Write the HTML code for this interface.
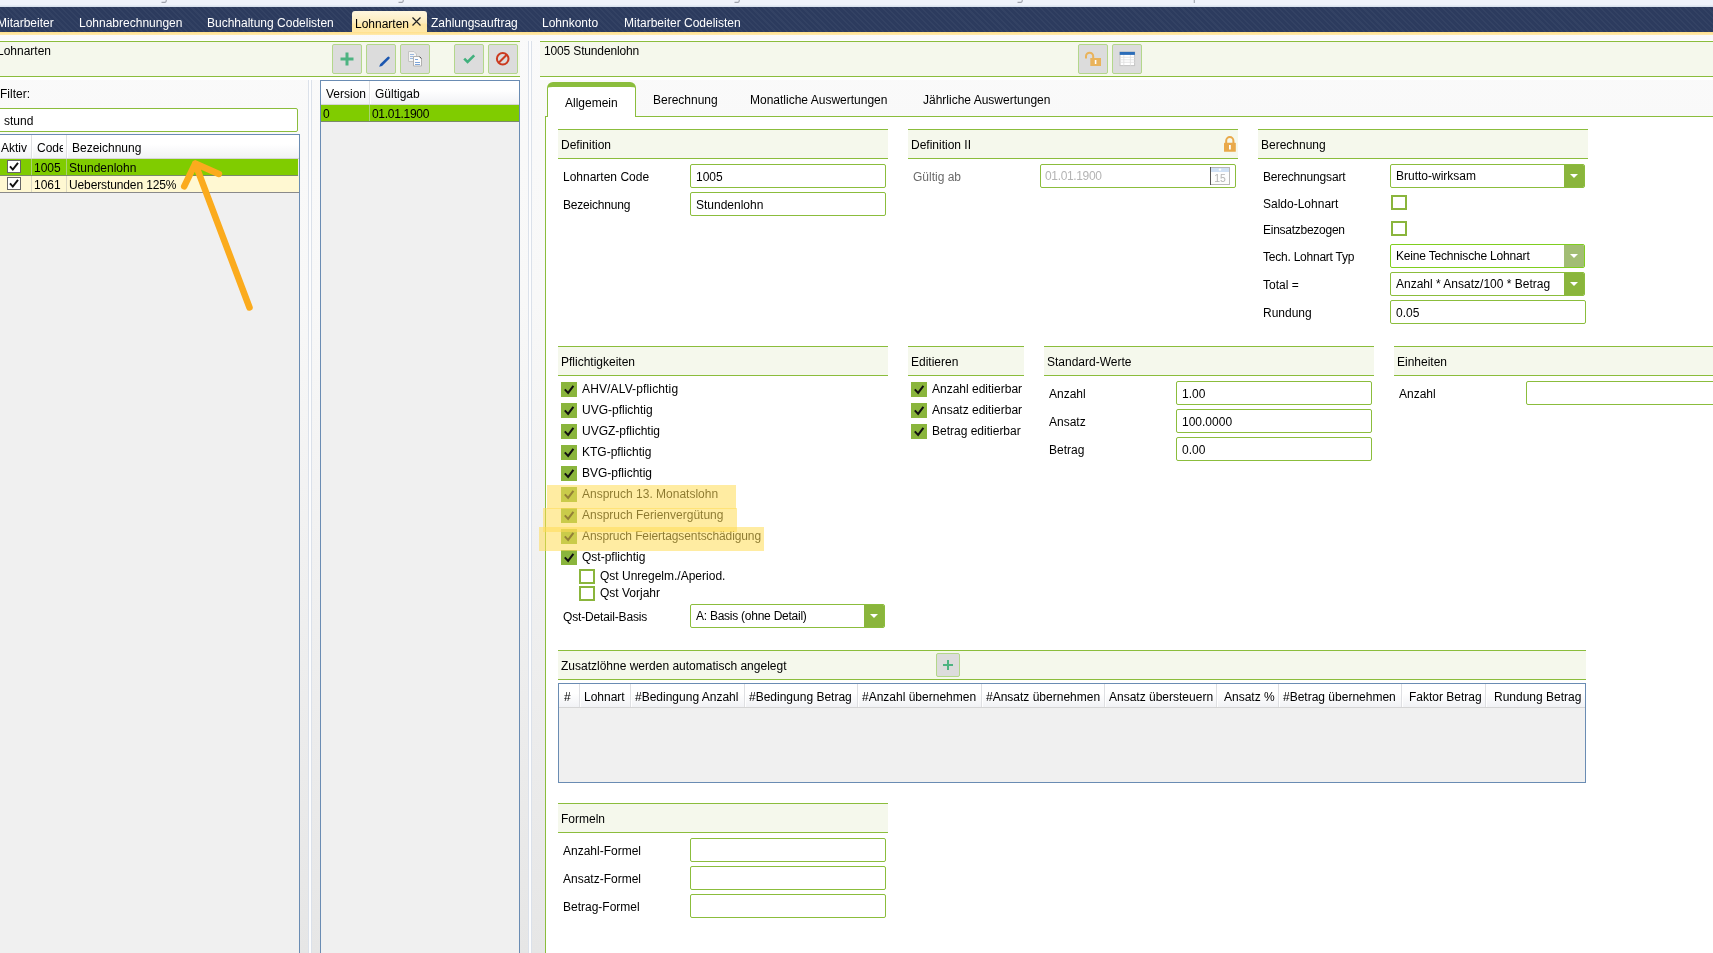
<!DOCTYPE html>
<html>
<head>
<meta charset="utf-8">
<title>Lohnarten</title>
<style>
*{box-sizing:border-box;margin:0;padding:0}
html,body{width:1713px;height:953px;overflow:hidden}
body{position:relative;font-family:"Liberation Sans",sans-serif;font-size:12px;color:#000;
 background:linear-gradient(#fafafa 0,#f8f8f8 300px,#e6e6e6 953px)}
.a{position:absolute;white-space:nowrap}
.t{position:absolute;white-space:nowrap;line-height:16px;height:16px}
/* top */
#top{left:0;top:0;width:1713px;height:7px;background:linear-gradient(#eef2fa 0,#eef2fa 4.5px,#d3deea 7px)}
#nav{left:0;top:7px;width:1713px;height:25px;background:#2c3b5e;
 background-image:repeating-linear-gradient(45deg,rgba(255,255,255,.035) 0,rgba(255,255,255,.035) 1.5px,rgba(0,0,0,0) 1.5px,rgba(0,0,0,0) 4px)}
#nav .t{color:#fff;top:8px}
#yl{left:0;top:32px;width:1713px;height:3px;background:linear-gradient(#ffe08a,#ffeab0)}
#atab{left:352px;top:11px;width:75px;height:22px;border-radius:3px 3px 0 0;background:linear-gradient(#fff7e0 0,#fdecbd 52%,#ffe6a2 62%,#ffe8a8 100%)}
/* green header bars */
.hb{position:absolute;background:#f5f8ec;border-top:1px solid #8bbd3c;border-bottom:1px solid #8bbd3c}
.gh{position:absolute;height:30px;background:#f5f8ec;border-top:1px solid #8bbd3c;border-bottom:1px solid #8bbd3c}
.gh span{position:absolute;left:3px;top:7px;line-height:16px}
/* buttons */
.btn{position:absolute;width:30px;height:30px;background:#dcdcdc;border:1px solid #b3d78b;border-radius:2px}
.btn svg{position:absolute;left:-1px;top:-1px}
/* inputs */
.in{position:absolute;height:24px;background:#fff;border:1px solid #8bbd3c;border-radius:2px;line-height:24px;padding-left:5px;white-space:nowrap;overflow:hidden}
.sel{position:absolute;height:24px;background:#fff;border:1px solid #8bbd3c;border-radius:2px;line-height:23px;padding-left:5px;white-space:nowrap;overflow:hidden}
.sel i{position:absolute;right:0;top:0;width:20px;height:22px;background:#8ab53c}
.sel i:after{content:"";position:absolute;left:6px;top:9px;border:4.5px solid transparent;border-top:4.5px solid #fff;border-bottom:0}
.lb{position:absolute;white-space:nowrap;line-height:16px}
/* checkboxes */
.cb{position:absolute;width:16px;height:15px;background:#8ab53c}
.cb svg{position:absolute;left:0;top:0}
.ce{position:absolute;width:16px;height:15px;background:#fff;border:2px solid #8ab53c}
/* grids */
.grid{position:absolute;background:#f0f0f0;border:1px solid #6a8cb3}
.gh2{position:absolute;left:0;top:0;right:0;background:linear-gradient(#fff 0,#fff 40%,#f1f2f5 100%);border-bottom:1px solid #d5d5d5}
.gh2 b{position:absolute;top:0;bottom:0;width:2px;background:#dedfe2;border-right:1px solid #fff}
.gh2 span{position:absolute;white-space:nowrap;line-height:16px}
</style>
</head>
<body>
<div id="w" style="position:absolute;left:0;top:0;width:1713px;height:953px;overflow:hidden;will-change:transform">
<div class="a" id="top"><svg class="a" style="left:0;top:0" width="1713" height="7" fill="none" stroke="#8b8f99" stroke-width="1.1" opacity=".8"><path d="M161.5 2.4h3.2q1.6 0 1.6-2.4" /><path d="M398.5 2.4h3.2q1.6 0 1.6-2.4" /><path d="M734.5 2.4h3.2q1.6 0 1.6-2.4" /><path d="M1017.5 2.4h3.2q1.6 0 1.6-2.4" /><path d="M1194.3 0v3"/></svg></div>
<div class="a" id="nav">
 <div class="a" id="atab" style="top:4px"></div>
 <span class="t" style="left:-3px">Mitarbeiter</span>
 <span class="t" style="left:79px">Lohnabrechnungen</span>
 <span class="t" style="left:207px">Buchhaltung Codelisten</span>
 <span class="t" style="left:355px;color:#000;top:9px">Lohnarten</span>
 <svg class="a" style="left:411px;top:9px" width="11" height="11"><path d="M1.5 1.5 L9.5 9.5 M9.5 1.5 L1.5 9.5" stroke="#222" stroke-width="1.2" fill="none"/></svg>
 <span class="t" style="left:431px">Zahlungsauftrag</span>
 <span class="t" style="left:542px">Lohnkonto</span>
 <span class="t" style="left:624px">Mitarbeiter Codelisten</span>
</div>
<div class="a" id="yl"></div>

<div class="a" style="left:0;top:40px;width:520px;height:1px;background:#fff"></div>
<div class="a" style="left:0;top:77px;width:520px;height:3px;background:#fff"></div>
<div class="a" style="left:540px;top:40px;width:1180px;height:1px;background:#fff"></div>
<div class="a" style="left:540px;top:77px;width:1180px;height:3px;background:#fff"></div>
<!-- LEFT PANEL -->
<div class="hb" style="left:-2px;top:41px;width:522px;height:36px"></div>
<span class="t" style="left:-3px;top:43px">Lohnarten</span>
<div class="btn" style="left:332px;top:44px"><svg width="30" height="30"><path d="M15 8.5V21.5M8.5 15H21.5" stroke="#4db381" stroke-width="3" fill="none"/></svg></div>
<div class="btn" style="left:366px;top:44px"><svg width="30" height="30"><path d="M13 22.8L14.09 20.27L21.39 13.07A1.3 1.3 0 0 1 23.21 14.93L15.91 22.13Z" transform="translate(0.15,-0.15)" fill="#1c57b0"/></svg></div>
<div class="btn" style="left:400px;top:44px"><svg width="30" height="30"><path d="M8.5 7.5h5.5l2.5 2.5v7.5h-8z" fill="#f4f4f4" stroke="#c4c4c4" stroke-width="1"/><path d="M10 10.5h4M10 12.5h4M10 14.5h4" stroke="#9bb8de" stroke-width="1"/><path d="M13.5 12.5h5.5l2.5 2.5v7h-8z" fill="#fdfdfd" stroke="#b0b0b0" stroke-width="1"/><path d="M19.5 12.5l2 2" stroke="#555" stroke-width="1"/><path d="M15 15.5h3M15 18.5h5M15 20.5h5" stroke="#7ea5d8" stroke-width="1.2" fill="none"/></svg></div>
<div class="btn" style="left:454px;top:44px"><svg width="30" height="30"><path d="M10.2 14.6L13.6 18L20.2 11.4" stroke="#41b07d" stroke-width="2.6" fill="none"/></svg></div>
<div class="btn" style="left:488px;top:44px"><svg width="30" height="30"><circle cx="14.7" cy="14.8" r="5.8" stroke="#cb3a1f" stroke-width="2" fill="none"/><path d="M10.7 18.8L18.7 10.8" stroke="#cb3a1f" stroke-width="2"/></svg></div>
<span class="t" style="left:0px;top:86px">Filter:</span>
<div class="in" style="left:-3px;top:108px;width:301px;height:24px;padding-left:6px;line-height:24px">stund</div>
<div class="grid" style="left:-2px;top:134px;width:302px;height:830px">
 <div class="gh2" style="height:24px"><b style="left:32px"></b><b style="left:67px"></b>
  <span style="left:2px;top:5px">Aktiv</span><span style="left:38px;top:5px;width:26px;overflow:hidden">Code</span><span style="left:73px;top:5px">Bezeichnung</span></div>
 <div class="a" style="left:0;top:24px;width:299px;height:17px;background:#80cc00;border-bottom:1px solid #7a8a6a">
  <b class="a" style="left:32px;top:0;width:1px;height:16px;background:#a9d275"></b><b class="a" style="left:67px;top:0;width:1px;height:16px;background:#a9d275"></b>
  <svg class="a" style="left:8px;top:1px" width="14" height="13"><rect x=".5" y=".5" width="13" height="12" fill="#fff" stroke="#666"/><path d="M3 6.4L5.8 9.6L11 2.8" stroke="#111" stroke-width="1.9" fill="none"/></svg><span class="t" style="left:35px;top:1px">1005</span><span class="t" style="left:70px;top:1px">Stundenlohn</span></div>
 <div class="a" style="left:0;top:41px;width:300px;height:17px;background:#fff8d2;border-bottom:1px solid #8a8a8a">
  <b class="a" style="left:32px;top:0;width:1px;height:16px;background:#dcd8c2"></b><b class="a" style="left:67px;top:0;width:1px;height:16px;background:#dcd8c2"></b>
  <svg class="a" style="left:8px;top:1px" width="14" height="13"><rect x=".5" y=".5" width="13" height="12" fill="#fff" stroke="#666"/><path d="M3 6.4L5.8 9.6L11 2.8" stroke="#111" stroke-width="1.9" fill="none"/></svg><span class="t" style="left:35px;top:1px">1061</span><span class="t" style="left:70px;top:1px;letter-spacing:-.12px">Ueberstunden 125%</span></div>
</div>
<div class="grid" style="left:320px;top:80px;width:200px;height:890px">
 <div class="gh2" style="height:24px"><b style="left:48px"></b>
  <span style="left:5px;top:5px">Version</span><span style="left:54px;top:5px">Gültigab</span></div>
 <div class="a" style="left:0;top:24px;width:198px;height:17px;background:#80cc00;border-bottom:1px solid #7a8a6a">
  <b class="a" style="left:48px;top:0;width:1px;height:16px;background:#a9d275"></b>
  <span class="t" style="left:2px;top:1px">0</span><span class="t" style="left:51px;top:1px;letter-spacing:-.3px">01.01.1900</span></div>
</div>
<div class="a" style="left:308px;top:80px;width:4px;height:880px;background:#fdfdfe;border-left:1px solid #dbe1ea;border-right:1px solid #dbe1ea"></div>
<div class="a" style="left:528px;top:41px;width:4px;height:920px;background:#fdfdfe;border-left:1px solid #dbe1ea;border-right:1px solid #dbe1ea"></div>

<!-- RIGHT PANEL -->
<div class="hb" style="left:540px;top:41px;width:1180px;height:36px"></div>
<span class="t" style="left:544px;top:43px;letter-spacing:-0.15px">1005 Stundenlohn</span>
<div class="btn" style="left:1078px;top:44px"><svg width="30" height="30"><path d="M8 14.5v-2.2a3.6 3.6 0 0 1 7.2 0V15" stroke="#e9b35b" stroke-width="2" fill="none"/><rect x="12.3" y="14" width="10.7" height="8" fill="#e9b35b"/><path d="M17.6 16v4" stroke="#fff" stroke-width="1.6"/></svg></div>
<div class="btn" style="left:1112px;top:44px"><svg width="30" height="30"><rect x="8" y="8" width="14.6" height="13.6" fill="#fff" stroke="#c4c4c4" stroke-width="1"/><path d="M8 13.3h14.6M8 15.8h14.6M8 18.3h14.6M11.8 8v13.6M18.4 8v13.6" stroke="#dedede" stroke-width=".8"/><rect x="7.7" y="7.9" width="15.2" height="3" fill="#2b6cb8"/></svg></div>
<div class="a" style="left:545px;top:116px;width:1180px;height:850px;background:#fff;border-left:1px solid #8bbd3c;border-top:1px solid #8bbd3c"></div>
<div class="a" style="left:547px;top:82px;width:89px;height:35px;background:#fff;border:1px solid #8bbd3c;border-top:5px solid #8bbd3c;border-bottom:0;border-radius:6px 6px 0 0"></div>
<span class="t" style="left:565px;top:95px">Allgemein</span>
<span class="t" style="left:653px;top:92px">Berechnung</span>
<span class="t" style="left:750px;top:92px">Monatliche Auswertungen</span>
<span class="t" style="left:923px;top:92px">Jährliche Auswertungen</span>
<div class="gh" style="left:558px;top:129px;width:330px"><span>Definition</span></div>
<span class="lb" style="left:563px;top:169px">Lohnarten Code</span>
<div class="in" style="left:690px;top:164px;width:196px">1005</div>
<span class="lb" style="left:563px;top:197px;letter-spacing:-.2px">Bezeichnung</span>
<div class="in" style="left:690px;top:192px;width:196px">Stundenlohn</div>
<div class="gh" style="left:908px;top:129px;width:330px"><span>Definition II</span><svg class="a" style="left:315px;top:6px" width="14" height="17"><path d="M3.2 8V4.7a3.6 3.6 0 0 1 7.2 0V8" stroke="#e9a94a" stroke-width="2" fill="none"/><rect x="1" y="6.7" width="11.8" height="9.1" rx=".6" fill="#e9a94a"/><path d="M6.9 9v4.6" stroke="#fff" stroke-width="1.8"/></svg></div>
<span class="lb" style="left:913px;top:169px;color:#6a6a6a">Gültig ab</span>
<div class="in" style="left:1040px;top:164px;width:196px;color:#b4b4b4;line-height:22px;padding-left:4px;letter-spacing:-.35px">01.01.1900</div>
<svg class="a" style="left:1210px;top:167px" width="20" height="18"><rect x=".5" y=".5" width="19" height="17" fill="#fdfdfd" stroke="#b8b8b8"/><rect x="1" y="1" width="18" height="4" fill="#cfe0f5"/><path d="M.5 0v18" stroke="#555" stroke-width="1"/><circle cx="10" cy="2.6" r="1.2" fill="#fff"/><text x="10" y="15" font-size="10.4" font-family="Liberation Sans" fill="#b4b4b4" text-anchor="middle">15</text></svg>
<div class="gh" style="left:1258px;top:129px;width:330px"><span>Berechnung</span></div>
<span class="lb" style="left:1263px;top:169px;letter-spacing:-0.16px">Berechnungsart</span>
<div class="sel" style="left:1390px;top:164px;width:195px">Brutto-wirksam<i></i></div>
<span class="lb" style="left:1263px;top:196px">Saldo-Lohnart</span>
<div class="ce" style="left:1391px;top:195px"></div>
<span class="lb" style="left:1263px;top:222px;letter-spacing:-0.26px">Einsatzbezogen</span>
<div class="ce" style="left:1391px;top:221px"></div>
<span class="lb" style="left:1263px;top:249px;letter-spacing:-0.23px">Tech. Lohnart Typ</span>
<div class="sel" style="left:1390px;top:244px;width:195px;letter-spacing:-.18px;border-color:#7fce1e">Keine Technische Lohnart<i style="background:#a2bd74"></i></div>
<span class="lb" style="left:1263px;top:277px">Total =</span>
<div class="sel" style="left:1390px;top:272px;width:195px">Anzahl * Ansatz/100 * Betrag<i></i></div>
<span class="lb" style="left:1263px;top:305px">Rundung</span>
<div class="in" style="left:1390px;top:300px;width:196px">0.05</div>
<div class="gh" style="left:558px;top:346px;width:330px"><span>Pflichtigkeiten</span></div>
<div class="cb" style="left:561px;top:382px"><svg width="16" height="15"><path d="M3.8 7.4L7.1 10.9L12.4 3.8" stroke="#111" stroke-width="2" fill="none"/></svg></div>
<span class="lb" style="left:582px;top:381px;letter-spacing:0.14px">AHV/ALV-pflichtig</span>
<div class="cb" style="left:561px;top:403px"><svg width="16" height="15"><path d="M3.8 7.4L7.1 10.9L12.4 3.8" stroke="#111" stroke-width="2" fill="none"/></svg></div>
<span class="lb" style="left:582px;top:402px">UVG-pflichtig</span>
<div class="cb" style="left:561px;top:424px"><svg width="16" height="15"><path d="M3.8 7.4L7.1 10.9L12.4 3.8" stroke="#111" stroke-width="2" fill="none"/></svg></div>
<span class="lb" style="left:582px;top:423px">UVGZ-pflichtig</span>
<div class="cb" style="left:561px;top:445px"><svg width="16" height="15"><path d="M3.8 7.4L7.1 10.9L12.4 3.8" stroke="#111" stroke-width="2" fill="none"/></svg></div>
<span class="lb" style="left:582px;top:444px">KTG-pflichtig</span>
<div class="cb" style="left:561px;top:466px"><svg width="16" height="15"><path d="M3.8 7.4L7.1 10.9L12.4 3.8" stroke="#111" stroke-width="2" fill="none"/></svg></div>
<span class="lb" style="left:582px;top:465px">BVG-pflichtig</span>
<div class="cb" style="left:561px;top:487px"><svg width="16" height="15"><path d="M3.8 7.4L7.1 10.9L12.4 3.8" stroke="#111" stroke-width="2" fill="none"/></svg></div>
<span class="lb" style="left:582px;top:486px">Anspruch 13. Monatslohn</span>
<div class="cb" style="left:561px;top:508px"><svg width="16" height="15"><path d="M3.8 7.4L7.1 10.9L12.4 3.8" stroke="#111" stroke-width="2" fill="none"/></svg></div>
<span class="lb" style="left:582px;top:507px">Anspruch Ferienvergütung</span>
<div class="cb" style="left:561px;top:529px"><svg width="16" height="15"><path d="M3.8 7.4L7.1 10.9L12.4 3.8" stroke="#111" stroke-width="2" fill="none"/></svg></div>
<span class="lb" style="left:582px;top:528px;letter-spacing:-.1px">Anspruch Feiertagsentschädigung</span>
<div class="cb" style="left:561px;top:550px"><svg width="16" height="15"><path d="M3.8 7.4L7.1 10.9L12.4 3.8" stroke="#111" stroke-width="2" fill="none"/></svg></div>
<span class="lb" style="left:582px;top:549px">Qst-pflichtig</span>
<div class="ce" style="left:579px;top:569px"></div>
<span class="lb" style="left:600px;top:568px">Qst Unregelm./Aperiod.</span>
<div class="ce" style="left:579px;top:586px"></div>
<span class="lb" style="left:600px;top:585px">Qst Vorjahr</span>
<span class="lb" style="left:563px;top:609px;letter-spacing:-0.16px">Qst-Detail-Basis</span>
<div class="sel" style="left:690px;top:604px;width:195px;letter-spacing:-0.25px">A: Basis (ohne Detail)<i></i></div>
<div class="gh" style="left:908px;top:346px;width:116px"><span>Editieren</span></div>
<div class="cb" style="left:911px;top:382px"><svg width="16" height="15"><path d="M3.8 7.4L7.1 10.9L12.4 3.8" stroke="#111" stroke-width="2" fill="none"/></svg></div>
<span class="lb" style="left:932px;top:381px">Anzahl editierbar</span>
<div class="cb" style="left:911px;top:403px"><svg width="16" height="15"><path d="M3.8 7.4L7.1 10.9L12.4 3.8" stroke="#111" stroke-width="2" fill="none"/></svg></div>
<span class="lb" style="left:932px;top:402px">Ansatz editierbar</span>
<div class="cb" style="left:911px;top:424px"><svg width="16" height="15"><path d="M3.8 7.4L7.1 10.9L12.4 3.8" stroke="#111" stroke-width="2" fill="none"/></svg></div>
<span class="lb" style="left:932px;top:423px">Betrag editierbar</span>
<div class="gh" style="left:1044px;top:346px;width:330px"><span>Standard-Werte</span></div>
<span class="lb" style="left:1049px;top:386px">Anzahl</span>
<div class="in" style="left:1176px;top:381px;width:196px">1.00</div>
<span class="lb" style="left:1049px;top:414px">Ansatz</span>
<div class="in" style="left:1176px;top:409px;width:196px">100.0000</div>
<span class="lb" style="left:1049px;top:442px">Betrag</span>
<div class="in" style="left:1176px;top:437px;width:196px">0.00</div>
<div class="gh" style="left:1394px;top:346px;width:330px"><span>Einheiten</span></div>
<span class="lb" style="left:1399px;top:386px">Anzahl</span>
<div class="in" style="left:1526px;top:381px;width:196px"></div>
<div class="a" style="left:547px;top:485px;width:189px;height:23.5px;background:rgba(255,221,85,.55)"></div>
<div class="a" style="left:543px;top:508px;width:194px;height:24px;background:rgba(255,221,85,.55)"></div>
<div class="a" style="left:539px;top:527px;width:225px;height:23.5px;background:rgba(255,221,85,.55)"></div>
<div class="gh" style="left:558px;top:650px;width:1028px"><span>Zusatzlöhne werden automatisch angelegt</span><div class="btn" style="left:378px;top:2px;width:24px;height:24px"><svg width="24" height="24"><path d="M12 7V17M7 12H17" stroke="#4db381" stroke-width="2" fill="none"/></svg></div></div>
<div class="grid" style="left:558px;top:683px;width:1028px;height:100px"><div class="gh2" style="height:24px"><span style="left:5px;top:5px">#</span><b style="left:20px"></b><span style="left:25px;top:5px">Lohnart</span><b style="left:71px"></b><span style="left:76px;top:5px">#Bedingung Anzahl</span><b style="left:185px"></b><span style="left:190px;top:5px">#Bedingung Betrag</span><b style="left:298px"></b><span style="left:303px;top:5px">#Anzahl übernehmen</span><b style="left:422px"></b><span style="left:427px;top:5px">#Ansatz übernehmen</span><b style="left:545px"></b><span style="left:550px;top:5px">Ansatz übersteuern</span><b style="left:657px"></b><span style="left:665px;top:5px">Ansatz %</span><b style="left:719px"></b><span style="left:724px;top:5px">#Betrag übernehmen</span><b style="left:842px"></b><span style="left:850px;top:5px">Faktor Betrag</span><b style="left:926px"></b><span style="left:935px;top:5px">Rundung Betrag</span></div></div>
<div class="gh" style="left:558px;top:803px;width:330px"><span>Formeln</span></div>
<span class="lb" style="left:563px;top:843px">Anzahl-Formel</span>
<div class="in" style="left:690px;top:838px;width:196px"></div>
<span class="lb" style="left:563px;top:871px">Ansatz-Formel</span>
<div class="in" style="left:690px;top:866px;width:196px"></div>
<span class="lb" style="left:563px;top:899px">Betrag-Formel</span>
<div class="in" style="left:690px;top:894px;width:196px"></div>
<svg class="a" style="left:170px;top:150px" width="100" height="170"><path d="M79.5 157.5L25.2 13.6M14.2 36.3L25.2 13.6L48.9 23.9" stroke="#fbab1d" stroke-width="6.5" fill="none" stroke-linecap="round" stroke-linejoin="round"/></svg>
</div>
</body>
</html>
